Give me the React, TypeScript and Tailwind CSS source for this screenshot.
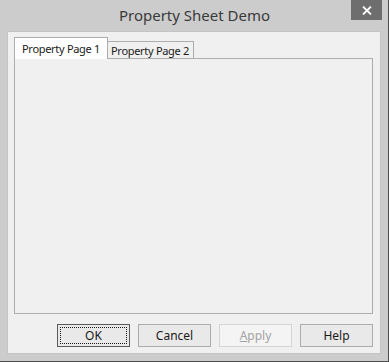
import React from "react";

const font = { fontFamily: '"Noto Sans", "Open Sans", sans-serif' };

function DlgButton({
  label,
  focused,
  disabled,
}: {
  label: React.ReactNode;
  focused?: boolean;
  disabled?: boolean;
}) {
  return (
    <button
      disabled={disabled}
      className={`w-[73px] h-[23px] text-[12px] leading-none flex items-center justify-center border ${
        disabled
          ? "border-[#d4d4d4] bg-[#f4f4f4] text-[#a3a3a3]"
          : focused
          ? "border-[#5a5a5a] bg-[#e9e9e9] text-[#1a1a1a]"
          : "border-[#acacac] bg-[#e9e9e9] text-[#1a1a1a]"
      }`}
    >
      {focused ? (
        <span className="flex items-center justify-center w-[67px] h-[17px] border border-dotted border-[#1a1a1a]">
          {label}
        </span>
      ) : (
        label
      )}
    </button>
  );
}

export default function App() {
  return (
    <div
      style={font}
      className="w-[389px] h-[362px] bg-[#cccccc] border-r border-b border-[#4d4d4d] flex flex-col"
    >
      {/* title bar */}
      <div className="h-[31px] flex items-start shrink-0">
        <div className="w-[38px]" />
        <div className="flex-1 pt-[5px] text-center text-[15px] text-[#3a3a3a] leading-[20px]">
          Property Sheet Demo
        </div>
        <div className="w-[31px] h-[20px] bg-[#6e6e6e] flex items-center justify-center mr-[6px]">
          <svg width="10" height="9" viewBox="0 0 10 9">
            <path d="M1 0.5 L9 8.5 M9 0.5 L1 8.5" stroke="#ffffff" strokeWidth="1.8" />
          </svg>
        </div>
      </div>

      {/* client area */}
      <div className="ml-[7px] w-[374px] h-[323px] bg-[#f0f0f0] border border-[#c4c4c4] flex flex-col px-[6px] pt-[5px]">
        {/* tabs */}
        <div className="flex items-end h-[22px] relative z-10 text-[11px] tracking-[-0.3px] text-[#1a1a1a] whitespace-nowrap">
          <div className="h-[22px] w-[94px] bg-white border border-b-0 border-[#adadad] flex items-start pt-[3px] pl-[7px] leading-[15px]">
            Property Page 1
          </div>
          <div className="h-[18px] w-[86px] bg-[#f0f0f0] border border-l-0 border-[#adadad] flex items-start pt-[1px] pl-[3px] leading-[15px]">
            Property Page 2
          </div>
        </div>
        <div className="w-[359px] h-[256px] -mt-px border border-[#adadad] bg-[#f0f0f0]" />

        {/* buttons */}
        <div className="flex justify-end gap-[8px] mt-[10px] pr-[1px]">
          <DlgButton label="OK" focused />
          <DlgButton label="Cancel" />
          <DlgButton
            label={
              <span>
                <span className="underline">A</span>pply
              </span>
            }
            disabled
          />
          <DlgButton label="Help" />
        </div>
      </div>
    </div>
  );
}
